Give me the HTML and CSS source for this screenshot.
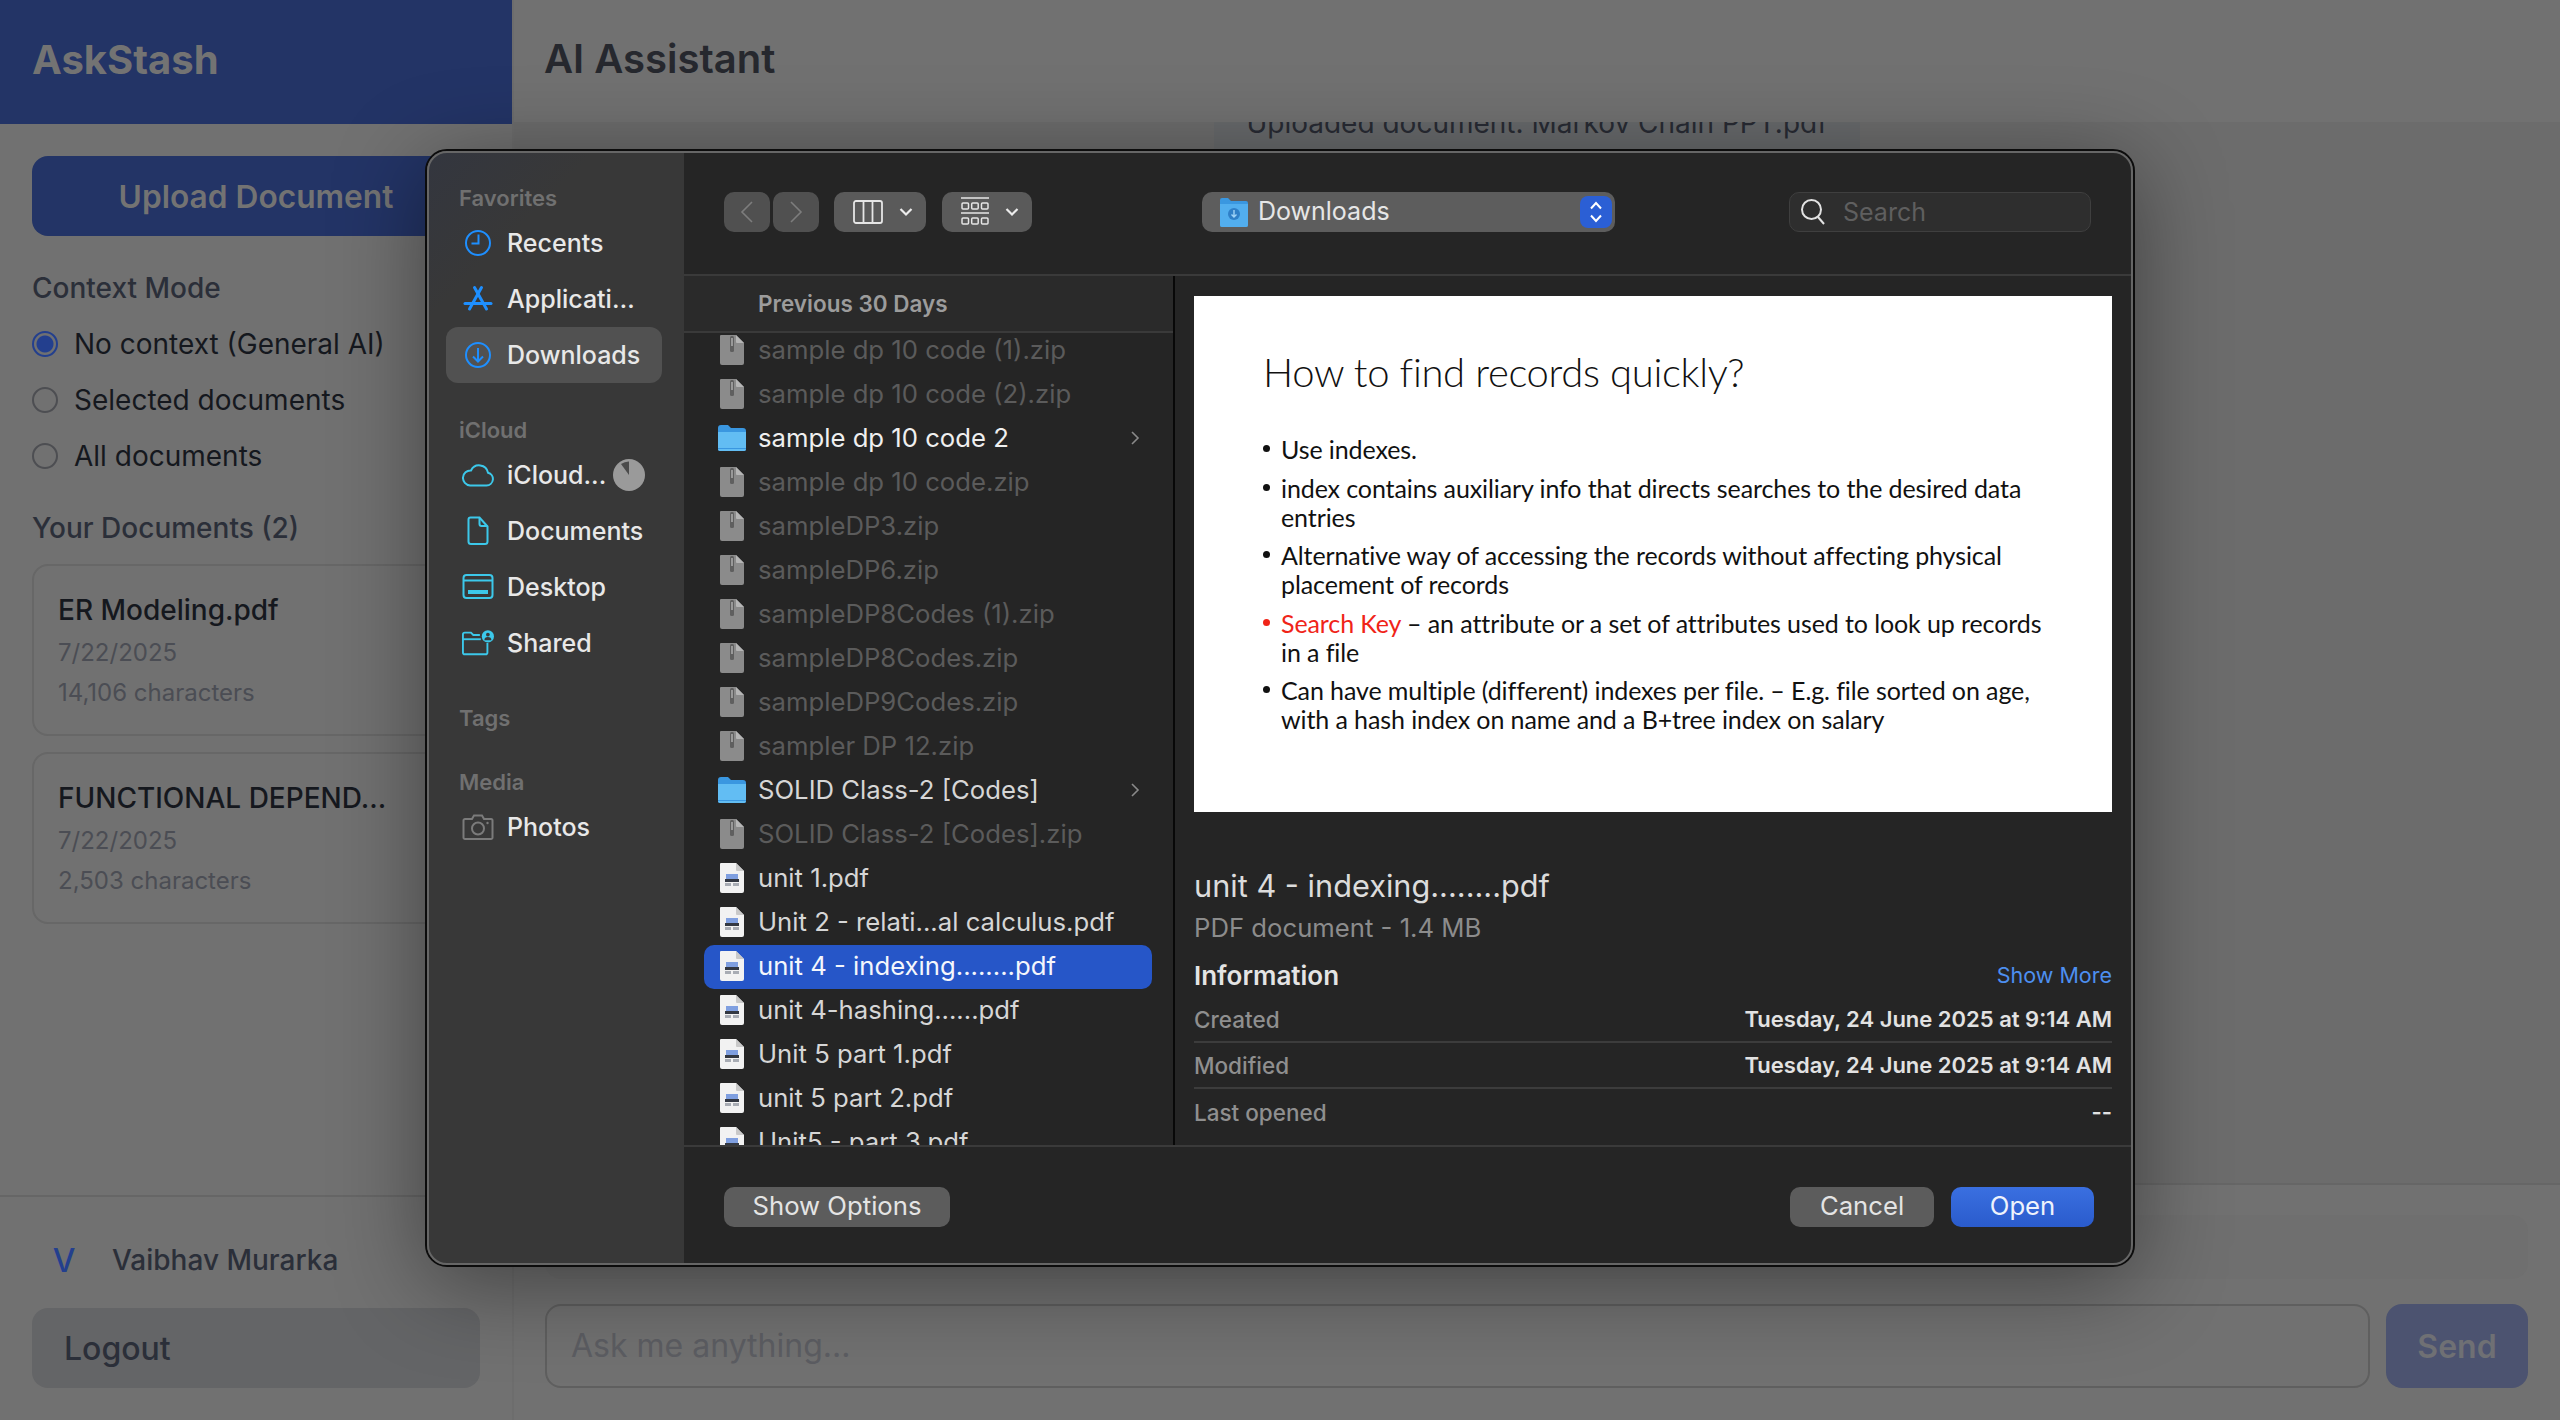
FILE: index.html
```html
<!DOCTYPE html>
<html lang="en">
<head>
<meta charset="utf-8">
<title>AskStash</title>
<link rel="stylesheet" href="styles.css">
</head>
<body>
<svg class="defs" width="0" height="0" aria-hidden="true">
  <symbol id="zip" viewBox="0 0 24 30">
    <path d="M1 0H16L24 8V28a2 2 0 0 1-2 2H2a2 2 0 0 1-2-2V1a1 1 0 0 1 1-1Z" fill="#8b8b8b"/>
    <path d="M16 0L24 8H17a1 1 0 0 1-1-1Z" fill="#b5b5b5"/>
    <rect x="10" y="1" width="4" height="16" rx="1.5" fill="#5f5f5f"/>
    <rect x="11.2" y="3" width="1.6" height="8" fill="#a9a9a9"/>
  </symbol>
  <symbol id="pdf" viewBox="0 0 24 30">
    <path d="M1 0H16L24 8V28a2 2 0 0 1-2 2H2a2 2 0 0 1-2-2V1a1 1 0 0 1 1-1Z" fill="#f2f2f2"/>
    <path d="M16 0L24 8H17a1 1 0 0 1-1-1Z" fill="#c9c9c9"/>
    <rect x="6" y="11" width="12" height="5" fill="#7f9fe0"/>
    <rect x="5" y="16" width="14" height="3" fill="#333842"/>
    <rect x="5" y="20" width="6" height="3" fill="#a8acb4"/>
    <rect x="13" y="20" width="6" height="3" fill="#a8acb4"/>
  </symbol>
  <symbol id="folder" viewBox="0 0 28 26">
    <path d="M0 3a3 3 0 0 1 3-3h7l3 3h12a3 3 0 0 1 3 3v18a2 2 0 0 1-2 2H2a2 2 0 0 1-2-2Z" fill="#3a97e0"/>
    <path d="M0 7h28v17a2 2 0 0 1-2 2H2a2 2 0 0 1-2-2Z" fill="#62bdf3"/>
    <rect y="23" width="28" height="1" fill="#3a97e0"/>
  </symbol>
  <symbol id="chev" viewBox="0 0 10 16">
    <path d="M2 2l6 6-6 6" fill="none" stroke="#8a8a8a" stroke-width="1.6"/>
  </symbol>
</svg>

<div class="app">
  <aside class="side">
    <header class="brand">AskStash</header>
    <div class="side-body">
      <button class="upload">Upload Document</button>
      <h3 class="side-title first">Context Mode</h3>
      <div class="radio"><span class="dot on"></span>No context (General AI)</div>
      <div class="radio"><span class="dot"></span>Selected documents</div>
      <div class="radio"><span class="dot"></span>All documents</div>
      <h3 class="side-title second">Your Documents (2)</h3>
      <div class="card">
        <div class="card-title">ER Modeling.pdf</div>
        <div class="card-date">7/22/2025</div>
        <div class="card-size">14,106 characters</div>
      </div>
      <div class="card">
        <div class="card-title">FUNCTIONAL DEPEND...</div>
        <div class="card-date">7/22/2025</div>
        <div class="card-size">2,503 characters</div>
      </div>
    </div>
    <div class="side-foot">
      <div class="user"><span class="avatar">V</span><span class="user-name">Vaibhav Murarka</span></div>
      <button class="logout">Logout</button>
    </div>
  </aside>

  <main class="main">
    <header class="main-head">AI Assistant</header>
    <div class="chat">
      <div class="bubble">Uploaded document: Markov Chain PPT.pdf</div>
    </div>
    <div class="composer">
      <div class="ghost-panel"></div>
      <div class="compose-row">
        <div class="ask">Ask me anything...</div>
        <button class="send">Send</button>
      </div>
    </div>
  </main>
</div>

<div class="dialog">
  <nav class="fav">
    <div class="fav-sec">
      <div class="fav-label">Favorites</div>
      <div class="fav-row">
        <svg class="fav-ic" viewBox="0 0 32 32"><g fill="none" stroke="#1e8fff" stroke-width="2"><circle cx="16" cy="16" r="12"/><path d="M16.5 7.5V16.5H9.5"/></g></svg>
        <span>Recents</span>
      </div>
      <div class="fav-row">
        <svg class="fav-ic" viewBox="0 0 32 32"><g fill="none" stroke="#1e8fff" stroke-width="3" stroke-linecap="round"><path d="M12.5 4.500L24.500 26"/><path d="M19.500 4.500L7.500 26"/><path d="M3 20.500h26"/></g></svg>
        <span>Applicati…</span>
      </div>
      <div class="fav-row sel">
        <svg class="fav-ic" viewBox="0 0 32 32"><g fill="none" stroke="#1e8fff" stroke-width="2"><circle cx="16" cy="16" r="12"/><path d="M16 9v13M11 17.5l5 5 5-5"/></g></svg>
        <span>Downloads</span>
      </div>
    </div>
    <div class="fav-sec">
      <div class="fav-label">iCloud</div>
      <div class="fav-row">
        <svg class="fav-ic" viewBox="0 0 32 32"><path d="M8 26.500h16.500a6.500 6.500 0 0 0 1.500-12.800A9 9 0 0 0 9 11.500 7.500 7.500 0 0 0 8 26.500Z" fill="none" stroke="#3cc8ea" stroke-width="2"/></svg>
        <span>iCloud...</span>
        <svg class="pie" viewBox="0 0 32 32"><circle cx="16" cy="16" r="16" fill="#9a9a9a"/><path d="M16 16L8 5a13.500 13.500 0 0 1 8-2.500Z" fill="#4b4b4b"/></svg>
      </div>
      <div class="fav-row">
        <svg class="fav-ic" viewBox="0 0 32 32"><g fill="none" stroke="#3cc8ea" stroke-width="2"><path d="M8.500 2.500h9l8 9v15a2.500 2.500 0 0 1-2.500 2.500h-14A2.500 2.500 0 0 1 6.500 26.500V4.500a2 2 0 0 1 2-2Z"/><path d="M17.500 3v6a2 2 0 0 0 2 2h6"/></g></svg>
        <span>Documents</span>
      </div>
      <div class="fav-row">
        <svg class="fav-ic" viewBox="0 0 32 32"><g fill="none" stroke="#3cc8ea" stroke-width="2"><rect x="1.500" y="4" width="29" height="23" rx="3"/><path d="M1.500 9.500h29"/></g><rect x="6" y="19" width="20" height="4" fill="#3cc8ea"/></svg>
        <span>Desktop</span>
      </div>
      <div class="fav-row">
        <svg class="fav-ic" viewBox="0 0 34 32"><g fill="none" stroke="#3cc8ea" stroke-width="2"><path d="M19 7.500H12L9.500 5H3a2 2 0 0 0-2 2v19a2 2 0 0 0 2 2h22a2 2 0 0 0 2-2V16"/><path d="M1 12h19"/></g><circle cx="27.500" cy="9" r="6.500" fill="#3cc8ea"/><circle cx="27.500" cy="7" r="2" fill="#383838"/><path d="M23.800 13a3.700 3.500 0 0 1 7.400 0Z" fill="#383838"/></svg>
        <span>Shared</span>
      </div>
    </div>
    <div class="fav-sec tags">
      <div class="fav-label">Tags</div>
    </div>
    <div class="fav-sec media">
      <div class="fav-label">Media</div>
      <div class="fav-row">
        <svg class="fav-ic" viewBox="0 0 32 32"><g fill="none" stroke="#7b7b7b" stroke-width="2"><path d="M3 8h7l2-3.500h8L22 8h7a1.500 1.500 0 0 1 1.500 1.500v17A1.500 1.500 0 0 1 29 28H3a1.500 1.500 0 0 1-1.500-1.500v-17A1.500 1.500 0 0 1 3 8Z"/><circle cx="16" cy="17.500" r="6"/></g><circle cx="25.500" cy="12" r="1.200" fill="#7b7b7b"/></svg>
        <span>Photos</span>
      </div>
    </div>
  </nav>

  <section class="pane">
    <div class="tools">
      <div class="nav-pair">
        <span class="tbtn nav"><svg class="nav-ic" viewBox="0 0 14 24"><path d="M12 2L2 12l10 10" fill="none" stroke="#7d7d7d" stroke-width="1.600"/></svg></span>
        <span class="tbtn nav"><svg class="nav-ic" viewBox="0 0 14 24"><path d="M2 2l10 10L2 22" fill="none" stroke="#7d7d7d" stroke-width="1.600"/></svg></span>
      </div>
      <span class="tbtn view">
        <svg class="col-ic" viewBox="0 0 30 24"><g fill="none" stroke="#e6e6e6" stroke-width="1.800"><rect x="1" y="1" width="28" height="22" rx="2"/><path d="M10.500 1v22M19.500 1v22"/></g></svg>
        <svg class="drop" viewBox="0 0 14 10"><path d="M1.500 2L7 7.500 12.500 2" fill="none" stroke="#ececec" stroke-width="2.200"/></svg>
      </span>
      <span class="tbtn gallery">
        <svg class="gal-ic" viewBox="0 0 28 30"><g fill="none" stroke="#e6e6e6" stroke-width="1.500"><path d="M0 1h28M0 16h28"/><rect x="1" y="6" width="6.500" height="6" rx="1"/><rect x="10.700" y="6" width="6.500" height="6" rx="1"/><rect x="20.500" y="6" width="6.500" height="6" rx="1"/><rect x="1" y="21" width="6.500" height="6" rx="1"/><rect x="10.700" y="21" width="6.500" height="6" rx="1"/><rect x="20.500" y="21" width="6.500" height="6" rx="1"/></g></svg>
        <svg class="drop" viewBox="0 0 14 10"><path d="M1.500 2L7 7.500 12.500 2" fill="none" stroke="#ececec" stroke-width="2.200"/></svg>
      </span>
      <span class="path">
        <svg class="path-ic" viewBox="0 0 28 30"><path d="M0 3a2 2 0 0 1 2-2h6l3 3h15a2 2 0 0 1 2 2v22a2 2 0 0 1-2 2H2a2 2 0 0 1-2-2Z" fill="#3a97e0"/><path d="M0 7h28v21a2 2 0 0 1-2 2H2a2 2 0 0 1-2-2Z" fill="#52aeee"/><circle cx="14" cy="17" r="6" fill="#2f7fc7"/><path d="M14 13v7M11.500 17.500l2.500 2.500 2.500-2.500" fill="none" stroke="#9ed3f7" stroke-width="1.400"/></svg>
        <span class="path-name">Downloads</span>
        <span class="stepper"><svg viewBox="0 0 14 24" class="step-ic"><path d="M2 8.500L7 3l5 5.500M2 15.500L7 21l5-5.500" fill="none" stroke="#fff" stroke-width="2"/></svg></span>
      </span>
      <span class="search">
        <svg class="search-ic" viewBox="0 0 26 28"><g fill="none" stroke="#e2e2e2" stroke-width="2"><circle cx="11.500" cy="11.500" r="9.500"/><path d="M18 19l6 7"/></g></svg>
        <span class="search-text">Search</span>
      </span>
    </div>

    <div class="browser">
      <div class="files">
        <div class="files-head">Previous 30 Days</div>
        <div class="files-list">
          <div class="file dim lead"><svg class="f-ic"><use href="#zip"/></svg>sample dp 10 code (1).zip</div>
          <div class="file dim"><svg class="f-ic"><use href="#zip"/></svg>sample dp 10 code (2).zip</div>
          <div class="file bright"><svg class="f-ic dir"><use href="#folder"/></svg>sample dp 10 code 2<svg class="f-chev"><use href="#chev"/></svg></div>
          <div class="file dim"><svg class="f-ic"><use href="#zip"/></svg>sample dp 10 code.zip</div>
          <div class="file dim"><svg class="f-ic"><use href="#zip"/></svg>sampleDP3.zip</div>
          <div class="file dim"><svg class="f-ic"><use href="#zip"/></svg>sampleDP6.zip</div>
          <div class="file dim"><svg class="f-ic"><use href="#zip"/></svg>sampleDP8Codes (1).zip</div>
          <div class="file dim"><svg class="f-ic"><use href="#zip"/></svg>sampleDP8Codes.zip</div>
          <div class="file dim"><svg class="f-ic"><use href="#zip"/></svg>sampleDP9Codes.zip</div>
          <div class="file dim"><svg class="f-ic"><use href="#zip"/></svg>sampler DP 12.zip</div>
          <div class="file"><svg class="f-ic dir"><use href="#folder"/></svg>SOLID Class-2 [Codes]<svg class="f-chev"><use href="#chev"/></svg></div>
          <div class="file dim"><svg class="f-ic"><use href="#zip"/></svg>SOLID Class-2 [Codes].zip</div>
          <div class="file"><svg class="f-ic"><use href="#pdf"/></svg>unit 1.pdf</div>
          <div class="file"><svg class="f-ic"><use href="#pdf"/></svg>Unit 2 - relati...al calculus.pdf</div>
          <div class="file picked"><svg class="f-ic"><use href="#pdf"/></svg>unit 4 - indexing........pdf</div>
          <div class="file"><svg class="f-ic"><use href="#pdf"/></svg>unit 4-hashing......pdf</div>
          <div class="file"><svg class="f-ic"><use href="#pdf"/></svg>Unit 5 part 1.pdf</div>
          <div class="file"><svg class="f-ic"><use href="#pdf"/></svg>unit 5 part 2.pdf</div>
          <div class="file"><svg class="f-ic"><use href="#pdf"/></svg>Unit5 - part 3.pdf</div>
        </div>
      </div>

      <div class="preview">
        <div class="slide">
          <div class="slide-title">How to find records quickly?</div>
          <ul class="slide-list">
            <li>Use indexes.</li>
            <li>index contains auxiliary info that directs searches to the desired data<br>entries</li>
            <li>Alternative way of accessing the records without affecting physical<br>placement of records</li>
            <li class="key"><span class="key-word">Search Key</span> – an attribute or a set of attributes used to look up records<br>in a file</li>
            <li>Can have multiple (different) indexes per file. – E.g. file sorted on age,<br>with a hash index on name and a B+tree index on salary</li>
          </ul>
        </div>
        <div class="doc-name">unit 4 - indexing........pdf</div>
        <div class="doc-type">PDF document - 1.4 MB</div>
        <div class="info-head"><span class="info-title">Information</span><span class="info-more">Show More</span></div>
        <div class="info-row"><span class="info-k">Created</span><span class="info-v">Tuesday, 24 June 2025 at 9:14 AM</span></div>
        <div class="info-row"><span class="info-k">Modified</span><span class="info-v">Tuesday, 24 June 2025 at 9:14 AM</span></div>
        <div class="info-row last"><span class="info-k">Last opened</span><span class="info-v">--</span></div>
      </div>
    </div>

    <div class="actions">
      <button class="mac options">Show Options</button>
      <button class="mac cancel">Cancel</button>
      <button class="mac open">Open</button>
    </div>
  </section>
</div>
</body>
</html>
```

FILE: styles.css
```css
* { box-sizing: border-box; }
html, body { margin: 0; height: 100%; }
body {
  background: #717171;
  font-family: Inter, "Liberation Sans", sans-serif;
  overflow: hidden;
}
button { font-family: inherit; border: 0; padding: 0; }
.defs { position: absolute; }

/* ---------- dimmed app behind the sheet ---------- */
.app { display: flex; height: 1420px; width: 2560px; }
.side {
  width: 512px;
  flex: none;
  display: flex;
  flex-direction: column;
  background: #717171;
}
.brand {
  height: 124px;
  background: #233466;
  color: #737373;
  font-size: 40px;
  font-weight: 700;
  line-height: 120px;
  padding-left: 32px;
}
.side-body { padding: 32px 32px 0; }
.upload {
  display: block;
  width: 448px;
  height: 80px;
  border-radius: 16px;
  background: #233466;
  color: #737373;
  font-size: 31.700px;
  font-weight: 600;
}
.side-title {
  margin: 0;
  height: 36px;
  line-height: 36px;
  font-size: 28px;
  font-weight: 500;
  color: #2b2f39;
}
.side-title.first { margin: 34px 0 10px; }
.side-title.second { margin: 26px 0 18px; }
.radio {
  height: 56px;
  display: flex;
  align-items: center;
  gap: 16px;
  font-size: 28px;
  color: #15181e;
}
.dot {
  width: 26px;
  height: 26px;
  border-radius: 50%;
  border: 2px solid #4d4e52;
  background: #717171;
  flex: none;
}
.dot.on {
  border-color: #233f8e;
  background: radial-gradient(circle, #233f8e 0 8px, #6f7072 9px);
}
.card {
  width: 448px;
  height: 172px;
  border: 2px solid #676767;
  border-radius: 16px;
  padding: 24px 24px 0;
  margin-bottom: 16px;
}
.card-title { font-size: 28px; font-weight: 500; line-height: 40px; color: #15181e; }
.card-date { font-size: 24px; line-height: 32px; margin-top: 7px; color: #4b4d54; }
.card-size { font-size: 24px; line-height: 32px; margin-top: 8px; color: #4b4d54; }
.side-foot {
  margin-top: auto;
  border-top: 2px solid #666;
  height: 225px;
  padding: 31px 32px 32px;
}
.user { display: flex; align-items: center; height: 64px; }
.avatar {
  width: 64px;
  text-align: center;
  margin-right: 16px;
  font-size: 32px;
  font-weight: 500;
  color: #233f8e;
}
.user-name { font-size: 28px; font-weight: 500; color: #2b2f39; }
.logout {
  display: block;
  margin-top: 16px;
  width: 448px;
  height: 80px;
  border-radius: 16px;
  background: #646567;
  color: #2b2f39;
  font-size: 32px;
  font-weight: 500;
  text-align: left;
  padding-left: 32px;
}

.main {
  flex: 1;
  display: flex;
  flex-direction: column;
  border-left: 2px solid #6d6d6d;
  min-width: 0;
}
.main-head {
  height: 122px;
  background: #717171;
  color: #26282e;
  font-size: 40px;
  font-weight: 600;
  line-height: 118px;
  padding-left: 30px;
}
.chat {
  flex: 1;
  background: #6c6c6c;
  overflow: hidden;
  display: flex;
  justify-content: center;
  align-items: flex-start;
}
.bubble {
  width: 646px;
  height: 60px;
  margin-top: -19px;
  background: #67696b;
  border-radius: 12px;
  text-align: center;
  color: #282b33;
  font-size: 28px;
  line-height: 40px;
  flex: none;
}
.composer {
  height: 237px;
  border-top: 2px solid #666;
  padding: 30px 32px 32px 31px;
  background: #717171;
}
.ghost-panel { height: 64px; border-radius: 16px; background: #6f6f6f; margin-bottom: 25px; }
.compose-row { display: flex; gap: 16px; height: 84px; }
.ask {
  flex: 1;
  border: 2px solid #5f5f5f;
  border-radius: 16px;
  color: #5c5d62;
  font-size: 32px;
  line-height: 79px;
  padding-left: 24px;
}
.send {
  width: 142px;
  flex: none;
  border-radius: 16px;
  background: #4c5370;
  color: #6f7074;
  font-size: 32px;
  font-weight: 600;
}

/* ---------- macOS open sheet ---------- */
.dialog {
  position: absolute;
  left: 425px;
  top: 149px;
  width: 1710px;
  height: 1118px;
  display: flex;
  border-radius: 22px;
  border: 2px solid #0c0c0c;
  outline: 2px solid #666;
  outline-offset: -4px;
  background: #252525;
  overflow: hidden;
  box-shadow: 0 16px 90px rgba(0, 0, 0, .42);
  color: #e4e4e4;
  font-size: 25.700px;
}
.fav {
  width: 257px;
  flex: none;
  padding-top: 33px;
  background: linear-gradient(135deg, #33363f 0, #383838 120px);
}
.fav-sec + .fav-sec { margin-top: 33px; }
.fav-sec.tags { margin-top: 33px; }
.fav-sec.media { margin-top: 36px; }
.fav-label {
  height: 28px;
  line-height: 28px;
  margin: 0 0 3px 32px;
  color: #707070;
  font-size: 22px;
  font-weight: 600;
}
.fav-row {
  height: 56px;
  margin: 0 22px 0 19px;
  padding-left: 16px;
  display: flex;
  align-items: center;
  gap: 13px;
  border-radius: 12px;
  color: #e8e8e8;
  font-size: 25px;
  font-weight: 500;
  white-space: nowrap;
}
.fav-row.sel { background: #515151; }
.fav-ic { width: 32px; height: 32px; flex: none; }
.pie { width: 32px; height: 32px; margin-left: -6px; flex: none; }

.pane { flex: 1; min-width: 0; display: flex; flex-direction: column; }
.tools {
  height: 125px;
  flex: none;
  display: flex;
  align-items: flex-start;
  padding: 41px 0 0 40px;
  border-bottom: 2px solid #3a3a3a;
}
.tbtn {
  height: 40px;
  border-radius: 10px;
  background: #5a5a5a;
  display: flex;
  align-items: center;
  justify-content: center;
}
.nav-pair { display: flex; gap: 3px; margin-right: 15px; }
.nav { width: 46px; background: #505050; }
.nav-ic { width: 14px; height: 24px; }
.view { width: 92px; gap: 16px; margin-right: 16px; padding-left: 6px; }
.col-ic { width: 30px; height: 24px; }
.drop { width: 14px; height: 10px; }
.gallery { width: 90px; gap: 16px; padding-left: 6px; }
.gal-ic { width: 28px; height: 30px; }
.path {
  width: 413px;
  height: 40px;
  margin-left: 170px;
  border-radius: 10px;
  background: #5d5d5d;
  display: flex;
  align-items: center;
  padding-left: 18px;
  font-size: 25px;
}
.path-ic { width: 28px; height: 30px; flex: none; }
.path-name { margin-left: 10px; color: #e6e6e6; position: relative; top: -1px; }
.stepper {
  margin-left: auto;
  margin-right: 3px;
  width: 32px;
  height: 32px;
  border-radius: 8px;
  background: #2b5fd5;
  display: flex;
  align-items: center;
  justify-content: center;
}
.step-ic { width: 14px; height: 24px; }
.search {
  width: 302px;
  height: 40px;
  margin-left: 174px;
  border-radius: 10px;
  background: #2e2e2e;
  border: 1px solid #3f3f3f;
  display: flex;
  align-items: center;
  padding-left: 10px;
  font-size: 25px;
}
.search-ic { width: 26px; height: 28px; flex: none; }
.search-text { margin-left: 17px; color: #5f5f5f; }

.browser { flex: 1; min-height: 0; display: flex; }
.files {
  width: 491px;
  flex: none;
  border-right: 2px solid #080808;
  display: flex;
  flex-direction: column;
  min-height: 0;
}
.files-head {
  height: 57px;
  flex: none;
  background: #2a2a2a;
  border-bottom: 2px solid #3a3a3a;
  color: #9c9c9c;
  font-size: 22.500px;
  font-weight: 600;
  line-height: 55px;
  padding-left: 74px;
}
.files-list { flex: 1; overflow: hidden; min-height: 0; }
.file {
  height: 44px;
  margin: 0 21px 0 20px;
  padding: 0 0 3px 16px;
  display: flex;
  align-items: center;
  border-radius: 10px;
  white-space: nowrap;
  color: #d6d6d6;
}
.file.lead { margin-top: -4px; }
.file.dim { color: #5b5b5b; }
.file.bright { color: #efefef; }
.file.picked { background: #2656c8; color: #f4f6fc; }
.f-ic { width: 24px; height: 30px; flex: none; margin-right: 14px; }
.f-ic.dir { width: 28px; height: 26px; margin: 0 12px 0 -2px; }
.f-chev { width: 10px; height: 16px; margin-left: auto; margin-right: 12px; }

.preview { flex: 1; min-width: 0; padding: 20px 21px 0 19px; overflow: hidden; }
.slide {
  height: 516px;
  background: #fff;
  padding: 52px 0 0 69px;
  color: #111;
  font-family: Lato, "Open Sans", sans-serif;
}
.slide-title { font-size: 40px; line-height: 48px; font-weight: 300; letter-spacing: -.35px; }
.slide-list {
  list-style: none;
  margin: 39px 0 0;
  padding: 0;
  font-size: 25px;
  line-height: 29px;
  white-space: nowrap;
  letter-spacing: -.1px;
}
.slide-list li { position: relative; padding-left: 18px; margin-bottom: 9.500px; }
.slide-list li::before {
  content: "";
  position: absolute;
  left: 0;
  top: 10px;
  width: 7px;
  height: 7px;
  border-radius: 50%;
  background: #111;
}
.slide-list li.key::before { background: #f02418; }
.key-word { color: #f02418; }
.doc-name { margin-top: 54px; font-size: 30.700px; line-height: 40px; color: #dcdcdc; }
.doc-type { margin-top: 5px; line-height: 34px; color: #8c8c8c; }
.info-head {
  margin: 13px 0 5px;
  height: 34px;
  display: flex;
  justify-content: space-between;
  align-items: center;
}
.info-title { font-weight: 600; color: #e4e4e4; font-size: 26px; }
.info-more { color: #4d8ff0; font-size: 21.500px; }
.info-row {
  height: 46px;
  display: flex;
  justify-content: space-between;
  align-items: center;
  border-bottom: 2px solid #3c3c3c;
  font-size: 22.500px;
  font-weight: 600;
}
.info-row.last { border-bottom: 0; }
.info-k { color: #8f8f8f; font-weight: 500; }
.info-v { color: #e2e2e2; font-size: 22px; }

.actions {
  height: 120px;
  flex: none;
  border-top: 2px solid #3a3a3a;
  display: flex;
  align-items: flex-start;
  padding: 40px 39px 0 40px;
}
.mac {
  height: 40px;
  padding-bottom: 3px;
  border-radius: 10px;
  background: #5c5c5c;
  color: #e4e4e4;
  font-size: 25.700px;
}
.options { width: 226px; }
.cancel { width: 144px; margin-left: auto; }
.open {
  width: 143px;
  margin-left: 17px;
  background: linear-gradient(#3a6fe0, #2a5bcc);
  color: #eef2fc;
}
```
